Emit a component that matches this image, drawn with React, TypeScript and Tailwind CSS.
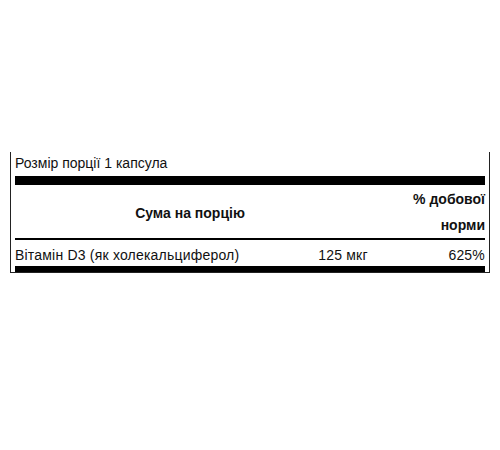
export default function App() {
  return (
    <div className="w-[500px] h-[450px] bg-white pt-[152px] px-[10px] font-['Liberation_Sans',Arial,sans-serif] text-[#111]">
      <div className="border-x border-b border-[#222] px-[4px] pb-0">
        <div className="h-[24px] leading-[22px] text-[14px]">Розмір порції 1 капсула</div>
        <div className="h-[9px] bg-black" />
        <div className="flex h-[53px] items-center">
          <div className="w-[350px] pt-[4px] text-center font-bold text-[14px]">Сума на порцію</div>
          <div className="flex-1 text-right font-bold text-[14px] leading-[26px]">
            <div>% добової</div>
            <div>норми</div>
          </div>
        </div>
        <div className="h-[2px] bg-black" />
        <div className="flex h-[26px] items-center pt-[5px] text-[14px] tracking-[0.2px]">
          <div className="w-[278px]">Вітамін D3 (як холекальциферол)</div>
          <div className="w-[100px] text-center">125 мкг</div>
          <div className="flex-1 text-right">625%</div>
        </div>
        <div className="h-[6px] bg-black" />
      </div>
    </div>
  );
}
